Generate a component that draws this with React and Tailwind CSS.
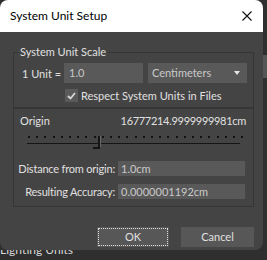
import React from "react";

function Slider() {
  const dots = Array.from({ length: 27 }, (_, i) => 1 + i * 8.2);
  return (
    <svg width="216" height="16" viewBox="0 0 216 16" className="block">
      {dots.map((x, i) => (
        <rect key={i} x={Math.round(x)} y="2" width="2" height="2" fill="#111111" />
      ))}
      <rect x="0" y="9" width="213" height="1" fill="#151515" />
      <rect x="71" y="2" width="2" height="13" fill="#151515" />
      <rect x="66" y="13" width="7" height="2" fill="#151515" />
      <rect x="73" y="2" width="1" height="11" fill="#6a6a6a" />
    </svg>
  );
}

export default function App() {
  return (
    <div className="flex w-[267px] h-[260px] bg-[#2f2f2f] overflow-hidden font-['Lato',sans-serif] text-[11px] text-[#e0e0e0] whitespace-nowrap">
      <div className="flex flex-col w-[263px]">
        <div className="w-[263px] h-[250px] shrink-0 rounded-[8px] bg-[#444444] overflow-hidden flex flex-col">
          <div className="h-[32px] shrink-0 bg-white flex items-center justify-between pl-[10px] pr-[10px]">
            <span className="text-[12px] text-black leading-none">System Unit Setup</span>
            <svg width="12" height="12" viewBox="0 0 12 12" className="block">
              <path d="M1.5 1.5 L10.5 10.5 M10.5 1.5 L1.5 10.5" stroke="#111" strokeWidth="1.1" fill="none" />
            </svg>
          </div>
          <div className="flex flex-col pl-[13px] pr-[9px] pt-[12px]">
            <fieldset className="border border-[#363636] pl-[8px] pt-[3px] pb-[5px] pr-[5px] min-w-0">
              <legend className="ml-[-4px] px-[2px] leading-[16px]">System Unit Scale</legend>
              <div className="flex items-center h-[20px]">
                <span className="w-[42px] leading-none">1 Unit =</span>
                <div className="w-[79px] h-[20px] bg-[#595959] flex items-center pl-[5px] text-[#c9c9c9]">1.0</div>
                <div className="ml-[5px] w-[99px] h-[20px] bg-[#595959] flex items-center justify-between pl-[4px] pr-[7px] text-[#c9c9c9]">
                  <span>Centimeters</span>
                  <svg width="6" height="4" viewBox="0 0 6 4" className="block">
                    <path d="M0 0 H6 L3 4 Z" fill="#e8e8e8" />
                  </svg>
                </div>
              </div>
              <div className="flex items-center mt-[6px] pl-[43px] h-[13px]">
                <div className="w-[13px] h-[13px] bg-[#5a5a5a] flex items-center justify-center">
                  <svg width="9" height="8" viewBox="0 0 9 8" className="block">
                    <path d="M1 4 L3.5 6.5 L8 1" stroke="#d8d8d8" strokeWidth="1.8" fill="none" />
                  </svg>
                </div>
                <span className="ml-[3px] leading-none">Respect System Units in Files</span>
              </div>
            </fieldset>
            <div className="border border-[#363636] pl-[6px] pr-[7px] pt-[4px] pb-[7px]">
              <div className="flex justify-between leading-[16px]">
                <span>Origin</span>
                <span className="tracking-[-0.3px]">16777214.9999999981cm</span>
              </div>
              <div className="mt-[5px] ml-[7px]">
                <Slider />
              </div>
              <div className="grid grid-cols-[95px_127px] gap-x-[3px] gap-y-[8px] mt-[11px] items-center">
                <div className="flex justify-end leading-none tracking-[-0.2px]">
                  <span>Distance from origin:</span>
                </div>
                <div className="h-[15px] bg-[#595959] flex items-center pl-[3px] text-[#c9c9c9] leading-none">1.0cm</div>
                <div className="flex justify-end leading-none tracking-[-0.2px]">
                  <span>Resulting Accuracy:</span>
                </div>
                <div className="h-[15px] bg-[#595959] flex items-center pl-[3px] text-[#c9c9c9] leading-none">0.0000001192cm</div>
              </div>
            </div>
            <div className="flex justify-end gap-[12px] mt-[20px]">
              <div className="w-[72px] h-[20px] bg-[#575757] p-[1px]">
                <div className="w-full h-full border border-dotted border-[#e0e0e0] flex items-center justify-center">OK</div>
              </div>
              <div className="w-[73px] h-[20px] bg-[#575757] flex items-center justify-center">Cancel</div>
            </div>
          </div>
        </div>
        <div className="h-[10px] overflow-hidden">
          <div className="mt-[-7px] leading-[14px] text-[12px] text-[#d8d8d8]">Lighting Units</div>
        </div>
      </div>
      <div className="w-[4px] pt-[55px]">
        <div className="h-[23px] bg-[#555555]"></div>
      </div>
    </div>
  );
}
